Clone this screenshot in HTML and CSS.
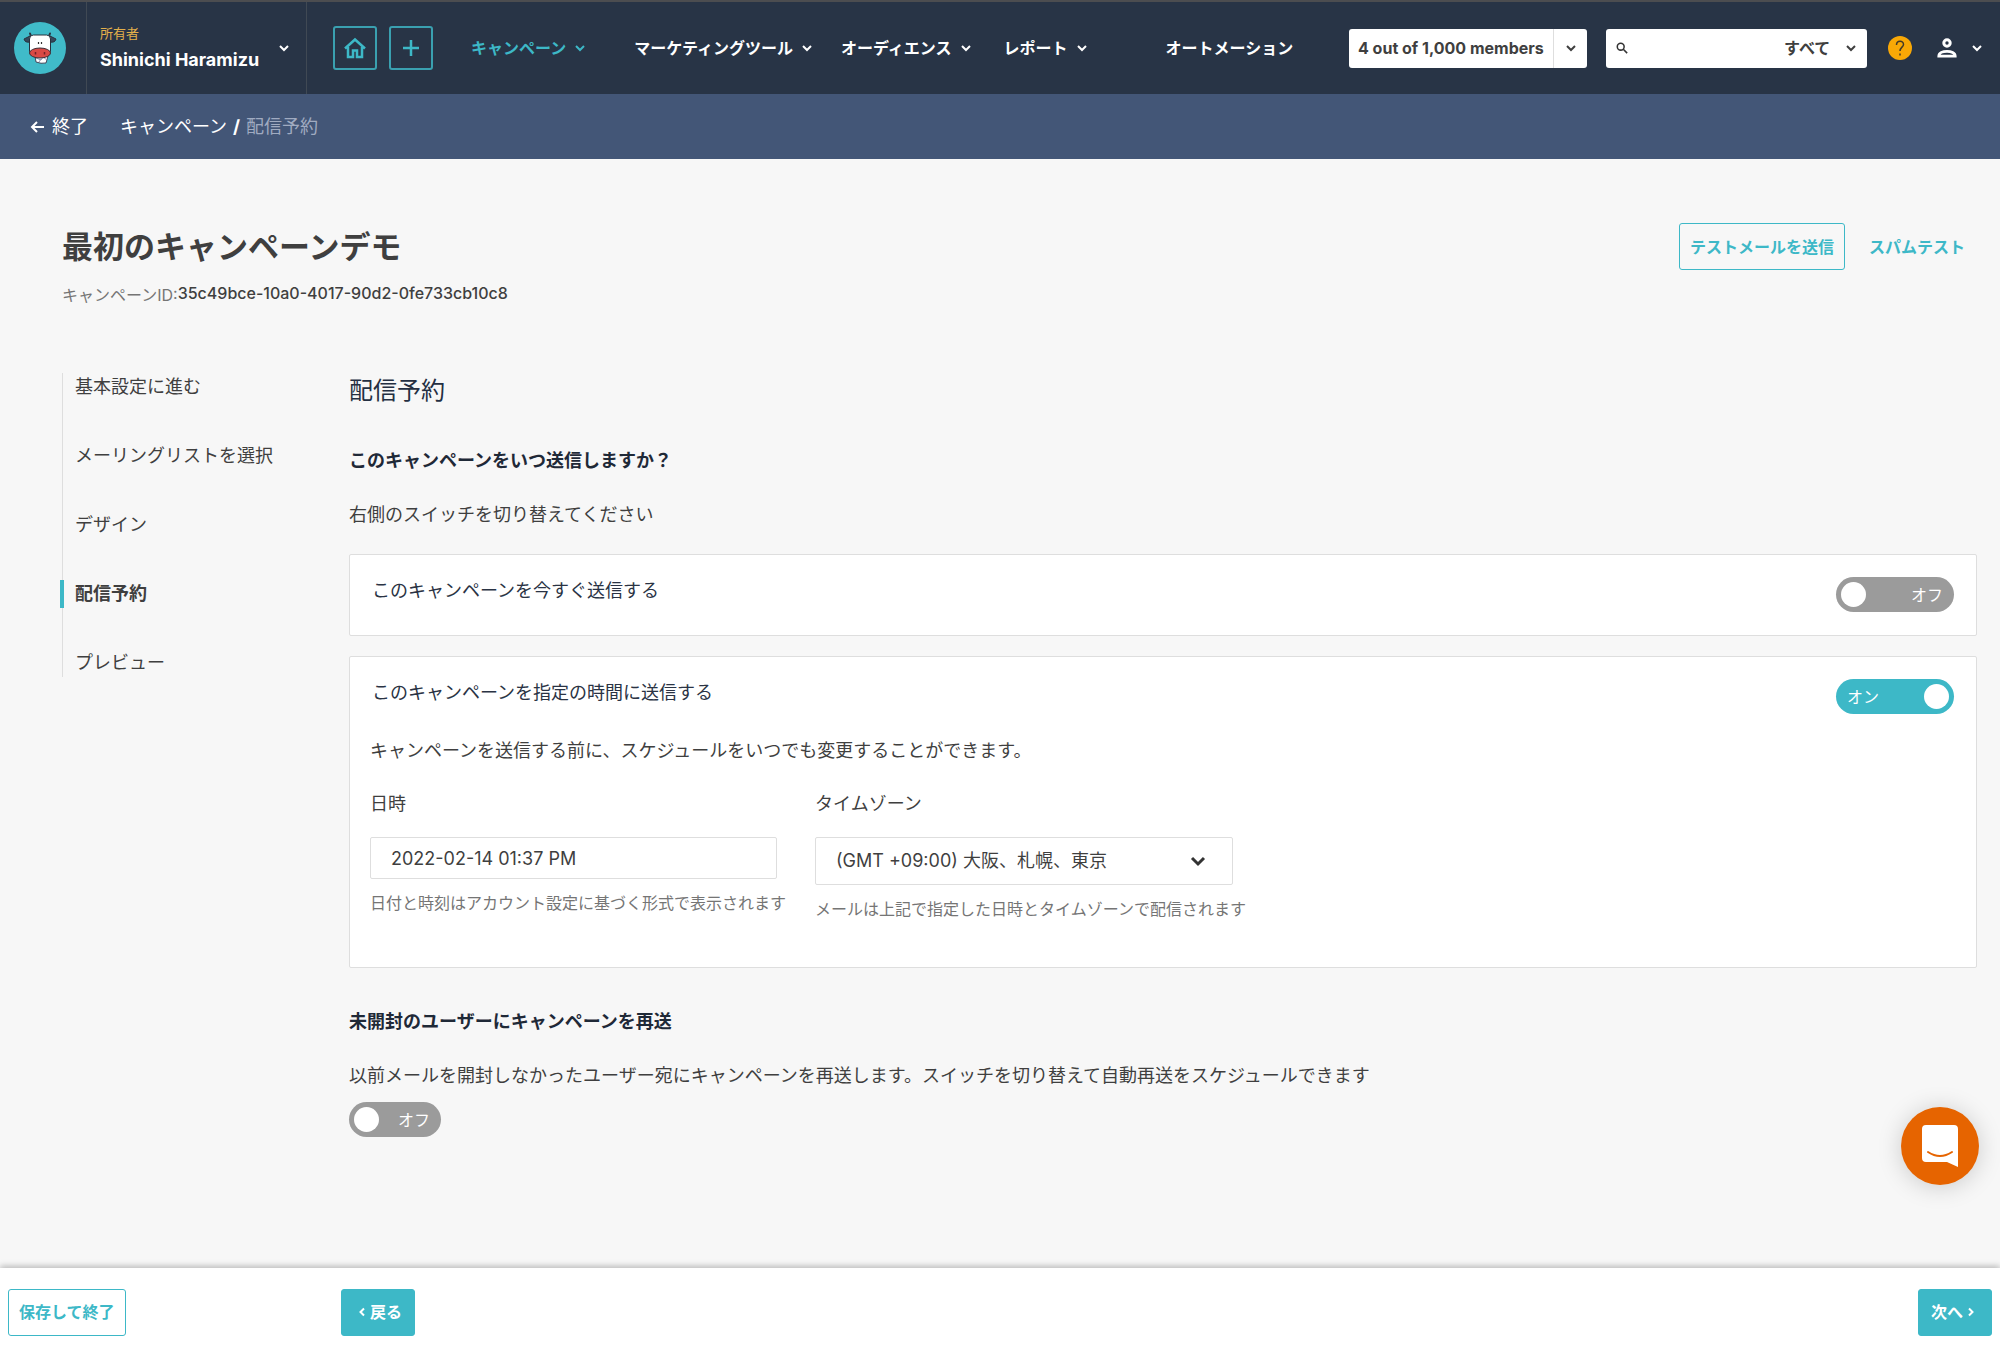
FILE: index.html
```html
<!DOCTYPE html>
<html lang="ja">
<head>
<meta charset="utf-8">
<meta name="viewport" content="width=device-width, initial-scale=1">
<title>配信予約</title>
<link rel="stylesheet" href="styles.css">
</head>
<body>
<svg class="sprite" aria-hidden="true">
  <symbol id="chevron" viewBox="0 0 12 12"><path d="M2 4l4 4 4-4" fill="none" stroke="currentColor" stroke-width="2"/></symbol>
</svg>

<header class="topbar">
  <a class="logo" href="#" aria-label="ホーム">
    <svg width="54" height="54" viewBox="0 0 54 54">
      <circle cx="27" cy="27" r="26" fill="#40bbc9"/>
      <path d="M18 15l-1-2.500M36 15l1-2.500" stroke="#28323f" stroke-width="2" stroke-linecap="round"/>
      <path d="M17 15L11 18q1 4 6 3zM37 15l6 3q-1 4-6 3z" fill="#34495c" stroke="#28323f"/>
      <rect x="16.500" y="14" width="21" height="20" rx="4" fill="#fff" stroke="#28323f"/>
      <path d="M25.500 21v2M28.500 21v2" stroke="#333" stroke-width="1.200"/>
      <path d="M22 35h13l-2 7q-5 1-10-1z" fill="#fff" stroke="#40475a"/>
      <path d="M23 37l5 2 2-3 4 3M26 41l2-3" fill="none" stroke="#8a94b4"/>
      <ellipse cx="27" cy="32" rx="10.500" ry="5" fill="#d84a45" stroke="#3a2f38"/>
      <path d="M22.500 31v2.500M31.500 31v2.500" stroke="#6d2228" stroke-width="1.500"/>
    </svg>
  </a>
  <button class="account" type="button">
    <span class="account-text"><span class="role">所有者</span><span class="name">Shinichi Haramizu</span></span>
    <svg class="chev"><use href="#chevron"/></svg>
  </button>
  <div class="quick">
    <a class="square" href="#" aria-label="ホーム">
      <svg width="24" height="24" viewBox="0 0 24 24" fill="none" stroke="currentColor" stroke-width="2.500"><path d="M2 12.500L12 3.500l10 9M5 11v10h5v-6.500h4V21h5V11"/></svg>
    </a>
    <button class="square" type="button" aria-label="追加">
      <svg width="24" height="24" viewBox="0 0 24 24" fill="none" stroke="currentColor" stroke-width="2.500"><path d="M12 4v16M4 12h16"/></svg>
    </button>
  </div>
  <nav class="nav">
    <button class="nav-item current" type="button">キャンペーン<svg class="chev"><use href="#chevron"/></svg></button>
    <button class="nav-item" type="button">マーケティングツール<svg class="chev"><use href="#chevron"/></svg></button>
    <button class="nav-item" type="button">オーディエンス<svg class="chev"><use href="#chevron"/></svg></button>
    <button class="nav-item report" type="button">レポート<svg class="chev"><use href="#chevron"/></svg></button>
    <a class="nav-item" href="#">オートメーション</a>
  </nav>
  <div class="tools">
    <button class="members" type="button"><span class="members-text">4 out of 1,000 members</span><span class="members-arrow"><svg class="chev"><use href="#chevron"/></svg></span></button>
    <form class="search">
      <svg width="12" height="12" viewBox="0 0 14 14" fill="none" stroke="#333" stroke-width="1.800"><circle cx="5.500" cy="5.500" r="4"/><path d="M8.500 8.500L13 13"/></svg>
      <input class="search-box" type="search" aria-label="検索">
      <span class="scope">
        <select class="scope-select" aria-label="検索対象"><option>すべて</option></select>
        <svg class="chev"><use href="#chevron"/></svg>
      </span>
    </form>
    <button class="help" type="button" aria-label="ヘルプ">
      <svg width="24" height="24" viewBox="0 0 24 24" fill="none" stroke="#443a28" stroke-width="1.500"><circle cx="12" cy="12" r="12" fill="#f9a806" stroke="none"/><path d="M8.500 9c0-5 7-5 7-.5 0 2.500-3.500 3-3.500 6.500M12 17.500v2"/></svg>
    </button>
    <button class="user" type="button" aria-label="ユーザー">
      <svg width="20" height="20" viewBox="0 0 20 20" fill="none" stroke="#fff" stroke-width="3"><circle cx="10" cy="5" r="3.200"/><path d="M1.800 18.200c0-6.500 16.400-6.500 16.400 0z" stroke-width="2.800"/></svg>
      <svg class="chev"><use href="#chevron"/></svg>
    </button>
  </div>
</header>

<div class="crumbs">
  <a class="exit" href="#"><svg width="14" height="14" viewBox="0 0 14 14" fill="none" stroke="currentColor" stroke-width="2"><path d="M14 7H2M7 2L2 7l5 5"/></svg>終了</a>
  <a class="crumb" href="#">キャンペーン</a>
  <span class="slash">/</span>
  <span class="crumb-here">配信予約</span>
</div>

<main class="page">
  <div class="head">
    <div class="head-text">
      <h1 class="title">最初のキャンペーンデモ</h1>
      <p class="campaign-id"><span class="id-label">キャンペーンID:</span><span class="id-value">35c49bce-10a0-4017-90d2-0fe733cb10c8</span></p>
    </div>
    <div class="head-actions">
      <button class="btn outline" type="button">テストメールを送信</button>
      <a class="text-link" href="#">スパムテスト</a>
    </div>
  </div>

  <div class="columns">
    <nav class="steps">
      <a class="step" href="#">基本設定に進む</a>
      <a class="step" href="#">メーリングリストを選択</a>
      <a class="step" href="#">デザイン</a>
      <a class="step active" href="#">配信予約</a>
      <a class="step" href="#">プレビュー</a>
    </nav>

    <div class="content">
      <h2 class="section-title">配信予約</h2>
      <h3 class="question">このキャンペーンをいつ送信しますか？</h3>
      <p class="text">右側のスイッチを切り替えてください</p>

      <section class="card">
        <div class="card-row">
          <label class="card-label" for="send-now">このキャンペーンを今すぐ送信する</label>
          <label class="switch"><input class="switch-input" id="send-now" type="checkbox"><span class="knob"></span><span>オフ</span></label>
        </div>
      </section>

      <section class="card tall">
        <div class="card-row">
          <label class="card-label" for="send-later">このキャンペーンを指定の時間に送信する</label>
          <label class="switch"><input class="switch-input" id="send-later" type="checkbox" checked><span class="knob"></span><span>オン</span></label>
        </div>
        <p class="text card-note">キャンペーンを送信する前に、スケジュールをいつでも変更することができます。</p>
        <div class="fields">
          <div class="field date">
            <label class="text" for="when">日時</label>
            <input class="box" id="when" type="text" value="2022-02-14 01:37 PM">
            <p class="hint">日付と時刻はアカウント設定に基づく形式で表示されます</p>
          </div>
          <div class="field zone">
            <label class="text" for="zone">タイムゾーン</label>
            <select class="box zone-select" id="zone"><option>(GMT +09:00) 大阪、札幌、東京</option></select>
            <p class="hint">メールは上記で指定した日時とタイムゾーンで配信されます</p>
          </div>
        </div>
      </section>

      <h3 class="question">未開封のユーザーにキャンペーンを再送</h3>
      <p class="text">以前メールを開封しなかったユーザー宛にキャンペーンを再送します。スイッチを切り替えて自動再送をスケジュールできます</p>
      <label class="switch small"><input class="switch-input" type="checkbox" aria-label="未開封のユーザーに再送"><span class="knob"></span><span>オフ</span></label>
    </div>
  </div>
</main>

<footer class="footer">
  <div class="footer-left"><button class="btn outline" type="button">保存して終了</button></div>
  <button class="btn solid back" type="button"><svg width="8" height="12" viewBox="0 0 8 12" fill="none" stroke="currentColor" stroke-width="2"><path d="M6 2.500L2.500 6 6 9.500"/></svg>戻る</button>
  <button class="btn solid next" type="button">次へ<svg width="8" height="12" viewBox="0 0 8 12" fill="none" stroke="currentColor" stroke-width="2"><path d="M2 2.500L5.500 6 2 9.500"/></svg></button>
</footer>

<button class="chat" type="button" aria-label="チャット">
  <svg width="38" height="42" viewBox="0 0 38 42"><path d="M5 0h28q4 0 4 4v38l-11-5H5q-4 0-4-4V4q0-4 4-4z" fill="#fff"/><path d="M7 27q12 8 24 0" fill="none" stroke="#e66400" stroke-width="2" stroke-linecap="round"/></svg>
</button>
</body>
</html>
```
FILE: styles.css
```css
:root {
  --teal: #3db8c7;
  --ink: #3f3f3f;
  --navy: #283446;
  --line: #dedede;
}

* {
  box-sizing: border-box;
}

body {
  margin: 0;
  min-height: 100vh;
  display: flex;
  flex-direction: column;
  background: #f7f7f7;
  color: var(--ink);
  font-family: Inter, "Noto Sans CJK JP", sans-serif;
  font-size: 18px;
  line-height: 28px;
}

h1, h2, h3, p {
  margin: 0;
}

a {
  color: inherit;
  text-decoration: none;
}

button, input, select {
  font: inherit;
  color: inherit;
}

button {
  padding: 0;
  border: 0;
  background: none;
  cursor: pointer;
}

svg {
  display: block;
  flex: none;
}

.sprite {
  position: absolute;
  width: 0;
  height: 0;
}

.chev {
  width: 12px;
  height: 12px;
}

/* Top bar */
.topbar {
  display: flex;
  align-items: stretch;
  height: 94px;
  border-top: 2px solid #4c4d50;
  background: var(--navy);
  color: #fff;
  font-size: 16px;
  white-space: nowrap;
}

.logo {
  width: 87px;
  padding-left: 13px;
  display: flex;
  align-items: center;
  border-right: 1px solid #404954;
}

.account {
  width: 220px;
  padding: 0 16px 0 13px;
  display: flex;
  align-items: center;
  justify-content: space-between;
  border-right: 1px solid #404954;
  text-align: left;
}

.account-text {
  display: flex;
  flex-direction: column;
}

.role {
  color: #e3b04b;
  font-size: 13px;
  line-height: 24px;
}

.name {
  font-size: 18px;
  font-weight: 700;
  line-height: 30px;
}

.quick {
  display: flex;
  align-items: center;
  gap: 12px;
  margin-left: 26px;
}

.square {
  width: 44px;
  height: 44px;
  display: grid;
  place-items: center;
  border: 2px solid #3aa0b0;
  border-radius: 3px;
  color: var(--teal);
}

.nav {
  display: flex;
  align-items: center;
  gap: 28px;
  margin-left: 38px;
}

.nav-item {
  display: flex;
  align-items: center;
  gap: 8px;
  font-weight: 700;
}

.nav-item.current {
  margin-right: 20px;
  color: var(--teal);
}

.nav-item.report {
  margin: 0 50px 0 4px;
}

.tools {
  display: flex;
  align-items: center;
  margin-left: auto;
  padding-right: 17px;
}

.members, .search {
  height: 39px;
  display: flex;
  align-items: center;
  border-radius: 3px;
  background: #fff;
  color: var(--ink);
  font-weight: 700;
}

.members {
  width: 238px;
  justify-content: space-between;
  padding-left: 9px;
}

.members-arrow {
  width: 34px;
  height: 39px;
  display: grid;
  place-items: center;
  border-left: 1px solid var(--line);
}

.search {
  width: 261px;
  margin-left: 19px;
  padding: 0 10px;
}

.search-box {
  flex: 1;
  min-width: 0;
  border: 0;
  background: none;
  outline: 0;
}

.scope {
  display: flex;
  align-items: center;
  gap: 12px;
}

.scope-select {
  appearance: none;
  padding: 0;
  border: 0;
  background: none;
}

.help {
  margin-left: 21px;
}

.user {
  display: flex;
  align-items: center;
  gap: 14px;
  margin-left: 25px;
}

/* Breadcrumbs */
.crumbs {
  display: flex;
  align-items: center;
  height: 65px;
  padding-left: 30px;
  background: #435677;
  color: #fff;
}

.exit {
  display: flex;
  align-items: center;
  gap: 8px;
  margin-right: 32px;
}

.slash {
  margin: 0 6px;
  font-weight: 700;
}

.crumb-here {
  color: #a0abc1;
}

/* Page */
.page {
  flex: 1;
  padding: 64px 23px 40px 62px;
}

.head {
  display: flex;
  justify-content: space-between;
  align-items: flex-start;
}

.title {
  font-size: 31px;
  line-height: 48px;
}

.campaign-id {
  display: flex;
  margin-top: 8px;
  font-size: 16px;
}

.id-label {
  padding-top: 2px;
  color: #757575;
}

.id-value {
  font-weight: 500;
}

.head-actions {
  display: flex;
  align-items: center;
  gap: 24px;
  padding-right: 12px;
}

.text-link {
  color: var(--teal);
  font-size: 16px;
  font-weight: 700;
}

.btn {
  height: 47px;
  padding: 0 10px;
  display: flex;
  align-items: center;
  justify-content: center;
  gap: 4px;
  border: 1px solid var(--teal);
  border-radius: 3px;
  font-size: 16px;
  font-weight: 700;
  white-space: nowrap;
}

.btn.outline {
  color: var(--teal);
}

.btn.solid {
  width: 74px;
  background: var(--teal);
  color: #fff;
}

.btn.back {
  padding-left: 14px;
}

.btn.next {
  margin-left: auto;
  padding-right: 14px;
}

.columns {
  display: grid;
  grid-template-columns: 287px 1fr;
  align-items: start;
  margin-top: 64px;
}

.steps {
  display: flex;
  flex-direction: column;
  gap: 41px;
  border-left: 1px solid var(--line);
}

.step {
  margin-left: -3px;
  padding-left: 11px;
  border-left: 4px solid transparent;
}

.step.active {
  border-color: var(--teal);
  font-weight: 700;
}

.section-title {
  padding-top: 2px;
  color: #242f42;
  font-size: 24px;
  font-weight: 400;
  line-height: 32px;
}

.question {
  margin-top: 40px;
  color: #1f2937;
  font-size: 18px;
  font-weight: 700;
}

.question + .text {
  margin-top: 26px;
}

.card {
  margin-top: 20px;
  padding: 22px;
  border: 1px solid var(--line);
  border-radius: 2px;
  background: #fff;
}

.text + .card {
  margin-top: 25px;
}

.card.tall {
  padding-bottom: 44px;
}

.card-row {
  display: flex;
  justify-content: space-between;
  align-items: flex-start;
  height: 36px;
}

.card-label {
  color: #2a3344;
}

.card-note, .fields {
  margin-left: -2px;
}

.card-note {
  margin-top: 22px;
}

.fields {
  display: flex;
  align-items: flex-start;
  gap: 38px;
  margin-top: 25px;
}

.field {
  display: flex;
  flex-direction: column;
}

.field.date {
  width: 407px;
}

.field.zone {
  width: 418px;
}

.box {
  height: 42px;
  margin-top: 19px;
  padding: 0 20px;
  border: 1px solid var(--line);
  border-radius: 2px;
  background-color: #fff;
}

.zone-select {
  appearance: none;
  height: 48px;
  background-image: url("data:image/svg+xml,%3Csvg xmlns='http://www.w3.org/2000/svg' viewBox='0 0 16 16'%3E%3Cpath d='M2 5l6 6 6-6' fill='none' stroke='%23333' stroke-width='3'/%3E%3C/svg%3E");
  background-repeat: no-repeat;
  background-position: right 26px center;
  background-size: 16px 16px;
}

.hint {
  margin-top: 10px;
  color: #757575;
  font-size: 16px;
  white-space: nowrap;
}

/* Switches */
.switch {
  position: relative;
  width: 118px;
  height: 35px;
  padding: 0 11px 0 5px;
  display: flex;
  align-items: center;
  justify-content: space-between;
  border-radius: 18px;
  background: #9b9b9b;
  color: #fff;
  font-size: 16px;
  cursor: pointer;
}

.switch.small {
  width: 92px;
  margin-top: 12px;
}

.switch-input {
  position: absolute;
  inset: 0;
  margin: 0;
  opacity: 0;
}

.knob {
  width: 25px;
  height: 25px;
  border-radius: 50%;
  background: #fff;
}

.switch:has(:checked) {
  flex-direction: row-reverse;
  padding: 0 5px 0 11px;
  background: var(--teal);
}

/* Footer */
.footer {
  display: flex;
  align-items: center;
  height: 82px;
  padding: 6px 8px 0;
  background: #fff;
  box-shadow: 0 -2px 6px rgba(0, 0, 0, 0.25);
}

.footer-left {
  width: 333px;
}

.chat {
  position: fixed;
  right: 21px;
  bottom: 165px;
  width: 78px;
  height: 78px;
  display: grid;
  place-items: center;
  border-radius: 50%;
  background: #e66400;
  box-shadow: 0 2px 24px rgba(0, 0, 0, 0.18);
}
```
